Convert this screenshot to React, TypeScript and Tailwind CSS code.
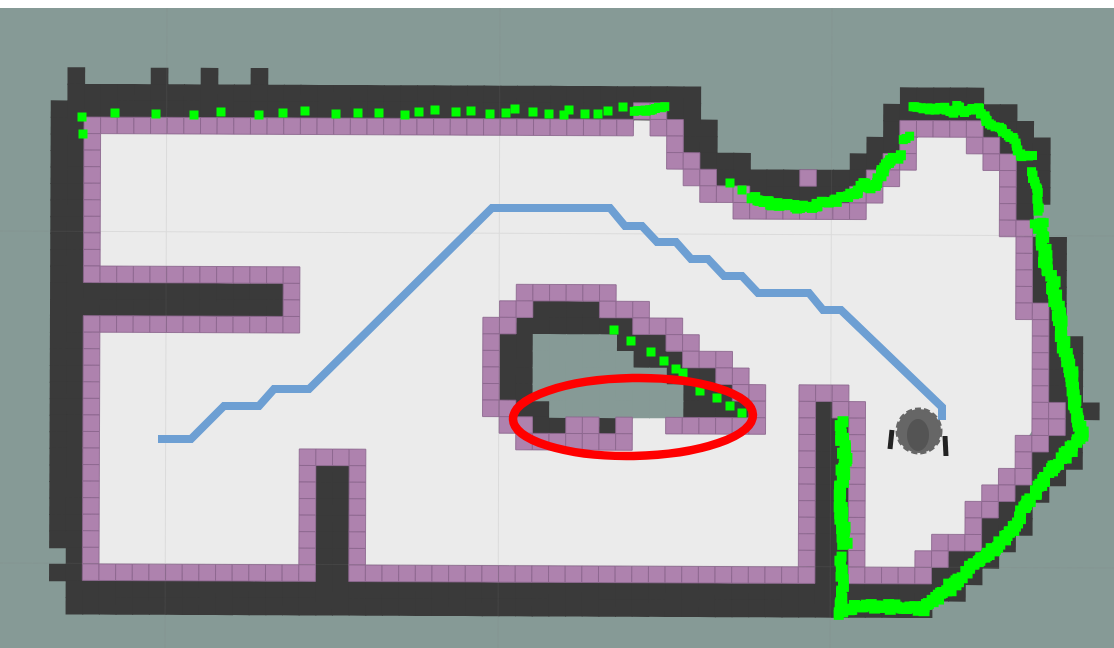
type Run = [number, number];
type Rows = Record<number, Run[]>;

// cost map cells, row -> [first col, last col]
const leftWall: Run = [-2, -1];

const DARK: Rows = {
  [-3]: [[-1, -1], [4, 4], [7, 7], [10, 10]],
  [-2]: [[-1, 36], [49, 53]],
  [-1]: [[-2, 36], [48, 55]],
  0: [leftWall, [36, 37], [48, 49], [54, 56]],
  1: [leftWall, [36, 37], [47, 48], [55, 57]],
  2: [leftWall, [37, 39], [46, 47], [56, 57]],
  3: [leftWall, [38, 46], [56, 57]],
  4: [leftWall, [40, 45], [56, 57]],
  5: [leftWall, [56, 56]],
  6: [leftWall],
  7: [leftWall, [57, 58]],
  8: [leftWall, [57, 58]],
  9: [leftWall, [57, 58]],
  10: [leftWall, [0, 11], [57, 58]],
  11: [leftWall, [0, 11], [27, 30], [58, 58]],
  12: [leftWall, [26, 32], [58, 58]],
  13: [leftWall, [25, 26], [32, 34], [58, 59]],
  14: [leftWall, [25, 26], [33, 35], [58, 59]],
  15: [leftWall, [25, 26], [35, 37], [58, 59]],
  16: [leftWall, [25, 26], [36, 38], [58, 59]],
  17: [leftWall, [26, 27], [36, 39], [44, 44], [59, 60]],
  18: [leftWall, [27, 28], [31, 31], [44, 45], [59, 59]],
  19: [leftWall, [44, 45], [58, 59]],
  20: [leftWall, [44, 45], [57, 59]],
  21: [leftWall, [14, 15], [44, 45], [57, 58]],
  22: [leftWall, [14, 15], [44, 45], [56, 57]],
  23: [leftWall, [14, 15], [44, 45], [55, 56]],
  24: [leftWall, [14, 15], [44, 45], [54, 56]],
  25: [leftWall, [14, 15], [44, 45], [54, 55]],
  26: [[-1, -1], [14, 15], [44, 45], [52, 54]],
  27: [leftWall, [14, 15], [44, 45], [51, 53]],
  28: [[-1, 52]],
  29: [[-1, 50]],
};

const UNKNOWN: Rows = {
  13: [[27, 31]],
  14: [[27, 32]],
  15: [[27, 34]],
  16: [[27, 35]],
  17: [[28, 35]],
};

const INFLATED: Rows = {
  [-1]: [[33, 34]],
  0: [[0, 32], [34, 35], [49, 53]],
  1: [[0, 0], [35, 35], [49, 49], [53, 54]],
  2: [[0, 0], [35, 36], [48, 49], [54, 55]],
  3: [[0, 0], [36, 37], [43, 43], [47, 48], [55, 55]],
  4: [[0, 0], [37, 39], [46, 47], [55, 55]],
  5: [[0, 0], [39, 46], [55, 55]],
  6: [[0, 0], [55, 56]],
  7: [[0, 0], [56, 56]],
  8: [[0, 0], [56, 56]],
  9: [[0, 12], [56, 56]],
  10: [[12, 12], [26, 31], [56, 56]],
  11: [[12, 12], [25, 26], [31, 33], [56, 57]],
  12: [[0, 12], [24, 25], [33, 35], [57, 57]],
  13: [[0, 0], [24, 24], [35, 36], [57, 57]],
  14: [[0, 0], [24, 24], [36, 38], [57, 57]],
  15: [[0, 0], [24, 24], [38, 39], [57, 57]],
  16: [[0, 0], [24, 24], [39, 40], [43, 45], [57, 57]],
  17: [[0, 0], [24, 25], [40, 40], [43, 43], [45, 46], [57, 58]],
  18: [[0, 0], [25, 26], [29, 30], [32, 32], [35, 40], [43, 43], [46, 46], [57, 58]],
  19: [[0, 0], [26, 32], [43, 43], [46, 46], [56, 57]],
  20: [[0, 0], [13, 16], [43, 43], [46, 46], [56, 56]],
  21: [[0, 0], [13, 13], [16, 16], [43, 43], [46, 46], [55, 56]],
  22: [[0, 0], [13, 13], [16, 16], [43, 43], [46, 46], [54, 55]],
  23: [[0, 0], [13, 13], [16, 16], [43, 43], [46, 46], [53, 54]],
  24: [[0, 0], [13, 13], [16, 16], [43, 43], [46, 46], [53, 53]],
  25: [[0, 0], [13, 13], [16, 16], [43, 43], [46, 46], [51, 53]],
  26: [[0, 0], [13, 13], [16, 16], [43, 43], [46, 46], [50, 51]],
  27: [[0, 13], [16, 43], [46, 50]],
};

const FREE_AREA =
  "0.5,0.5 33,0.5 33,-0.5 34.5,-0.5 35.5,1.5 36.5,2.5 37.5,3.5 39.5,5.5 46,5.5 47.5,4.5 48.5,3.5 49.5,1.5 49.5,0.5 53.5,0.5 55.5,2.5 55.5,6 56.5,7 56.5,11.5 57.5,12 57.5,18 56.5,19.5 56.5,21 54,23 53.5,25.5 51,26 50,27.5 46.5,27.5 46.5,17.5 45,17 43.5,17 43.5,27.5 0.5,27.5";

const SCAN_DOTS: [number, number][] = [
  [82, 117], [83, 134], [115, 113], [156, 114], [194, 115], [221, 112], [259, 115], [283, 113],
  [305, 111], [336, 114], [358, 113], [379, 113], [405, 115], [419, 112], [435, 110], [456, 112],
  [471, 111], [490, 114], [506, 113], [515, 109], [533, 112], [549, 114], [564, 115], [569, 110],
  [585, 114], [598, 114], [608, 111], [623, 107], [730, 183], [742, 190],
  [614, 330], [631, 341], [651, 352], [664, 361], [676, 369], [683, 373], [700, 391], [717, 398],
  [730, 406], [742, 413],
];

const SCAN_LINES: { pts: [number, number][]; spread: number; size: number }[] = [
  { pts: [[635, 112], [650, 110], [665, 107]], spread: 1, size: 9 },
  {
    pts: [
      [752, 198], [767, 203], [784, 205], [799, 208], [816, 205], [838, 200], [852, 195], [862, 185],
      [875, 187], [882, 170], [889, 162], [900, 155],
    ],
    spread: 2,
    size: 10,
  },
  { pts: [[904, 140], [910, 136]], spread: 1, size: 9 },
  {
    pts: [
      [912, 107], [930, 109], [944, 108], [953, 113], [958, 107], [965, 112], [978, 108], [987, 122],
      [1001, 130], [1012, 138], [1020, 155], [1033, 156],
    ],
    spread: 1.5,
    size: 9,
  },
  { pts: [[1031, 172], [1037, 190], [1039, 212]], spread: 1, size: 9 },
  { pts: [[1035, 223], [1045, 223]], spread: 1, size: 9 },
  {
    pts: [
      [1040, 226], [1045, 257], [1054, 287], [1060, 320], [1063, 344], [1072, 374], [1074, 397],
      [1079, 421], [1082, 437], [1068, 451], [1054, 467], [1040, 484], [1026, 507], [1012, 531],
      [997, 547], [976, 564], [958, 581], [933, 601], [923, 609], [894, 607], [859, 606], [841, 612],
    ],
    spread: 2.5,
    size: 11,
  },
  { pts: [[841, 424], [845, 457], [841, 491], [841, 514], [845, 544]], spread: 2.5, size: 11 },
  { pts: [[841, 556], [843, 591], [840, 614]], spread: 2, size: 10 },
];

const PLAN =
  "158,439 191,439 224,406 259,406 274,389 309,389 492,208 610,208 625,226 642,226 657,242 676,242 691,259 708,259 724,276 742,276 758,293 809,293 823,310 841,310 942,407 942,420";

const flatten = (rows: Rows) =>
  Object.entries(rows).flatMap(([r, runs]) =>
    runs.flatMap(([a, b]) => {
      const cells: [number, number][] = [];
      for (let c = a; c <= b; c++) cells.push([c, Number(r)]);
      return cells;
    }),
  );

// laser hits are noisy: scatter small squares along each traced wall
const jitter = (n: number) => {
  const v = Math.sin(n * 12.9898) * 43758.5453;
  return (v - Math.floor(v)) * 2 - 1;
};

const scatter = (pts: [number, number][], spread: number) => {
  const out: [number, number][] = [];
  for (let i = 0; i < pts.length - 1; i++) {
    const [x0, y0] = pts[i];
    const [x1, y1] = pts[i + 1];
    const n = Math.max(1, Math.round(Math.hypot(x1 - x0, y1 - y0) / 3));
    for (let k = 0; k <= n; k++) {
      const seed = x0 + y0 * 3 + k * 7;
      out.push([
        x0 + ((x1 - x0) * k) / n + jitter(seed) * spread,
        y0 + ((y1 - y0) * k) / n + jitter(seed + 1) * spread,
      ]);
    }
  }
  return out;
};

const CostMap = () => (
  <svg viewBox="0 8 1114 640" className="block h-[640px] w-[1114px] blur-[0.75px]">
    <g transform="matrix(16.65 0.07 -0.06 16.55 84 117)">
      <polygon points={FREE_AREA} className="fill-[#ebebeb]" />
      {flatten(DARK).map(([c, r]) => (
        <rect key={`d${c}_${r}`} x={c} y={r} width={1.06} height={1.06} className="fill-[#3a3a3a]" />
      ))}
      {flatten(UNKNOWN).map(([c, r]) => (
        <rect key={`u${c}_${r}`} x={c} y={r} width={1.06} height={1.06} className="fill-[#869a96]" />
      ))}
      {flatten(INFLATED).map(([c, r]) => (
        <rect
          key={`p${c}_${r}`}
          x={c}
          y={r}
          width={1}
          height={1}
          className="fill-[#ae82ae] stroke-[#8a648c] stroke-[0.05]"
        />
      ))}
    </g>

    {/* rviz grid, barely visible */}
    <g className="stroke-[#808080] stroke-1 opacity-15">
      <line x1="167" y1="8" x2="165" y2="648" />
      <line x1="500" y1="8" x2="498" y2="648" />
      <line x1="832" y1="8" x2="830" y2="648" />
      <line x1="0" y1="231" x2="1114" y2="236" />
      <line x1="0" y1="563" x2="1114" y2="568" />
    </g>

    <polyline
      points={PLAN}
      className="fill-none stroke-[#6d9fd3] stroke-[8]"
      strokeLinejoin="miter"
    />

    {SCAN_DOTS.map(([x, y]) => (
      <rect key={`${x}_${y}`} x={x - 4.5} y={y - 4.5} width={9} height={9} className="fill-[#00ff00]" />
    ))}
    {SCAN_LINES.map((l) =>
      scatter(l.pts, l.spread).map(([x, y], i) => (
        <rect
          key={`${l.pts[0][0]}_${i}`}
          x={x - l.size / 2}
          y={y - l.size / 2}
          width={l.size}
          height={l.size}
          className="fill-[#00ff00]"
        />
      )),
    )}

    {/* robot */}
    <circle
      cx="919"
      cy="431"
      r="22"
      className="fill-[#666666] stroke-[#666666] stroke-[3]"
      strokeDasharray="6 3"
    />
    <ellipse cx="918" cy="435" rx="11" ry="16" className="fill-[#545454]" />
    <line x1="892" y1="430" x2="890" y2="449" className="stroke-[#222222] stroke-[5]" />
    <line x1="945" y1="436" x2="946" y2="456" className="stroke-[#222222] stroke-[5]" />

    <ellipse
      cx="633"
      cy="417"
      rx="120"
      ry="39"
      transform="rotate(-1 633 417)"
      className="fill-none stroke-[#ff0000] stroke-[8.5]"
    />
  </svg>
);

export default function App() {
  return (
    <div className="h-[648px] w-[1114px] overflow-hidden bg-white pt-2">
      <div className="h-[640px] w-[1114px] bg-[#869a96]">
        <CostMap />
      </div>
    </div>
  );
}
